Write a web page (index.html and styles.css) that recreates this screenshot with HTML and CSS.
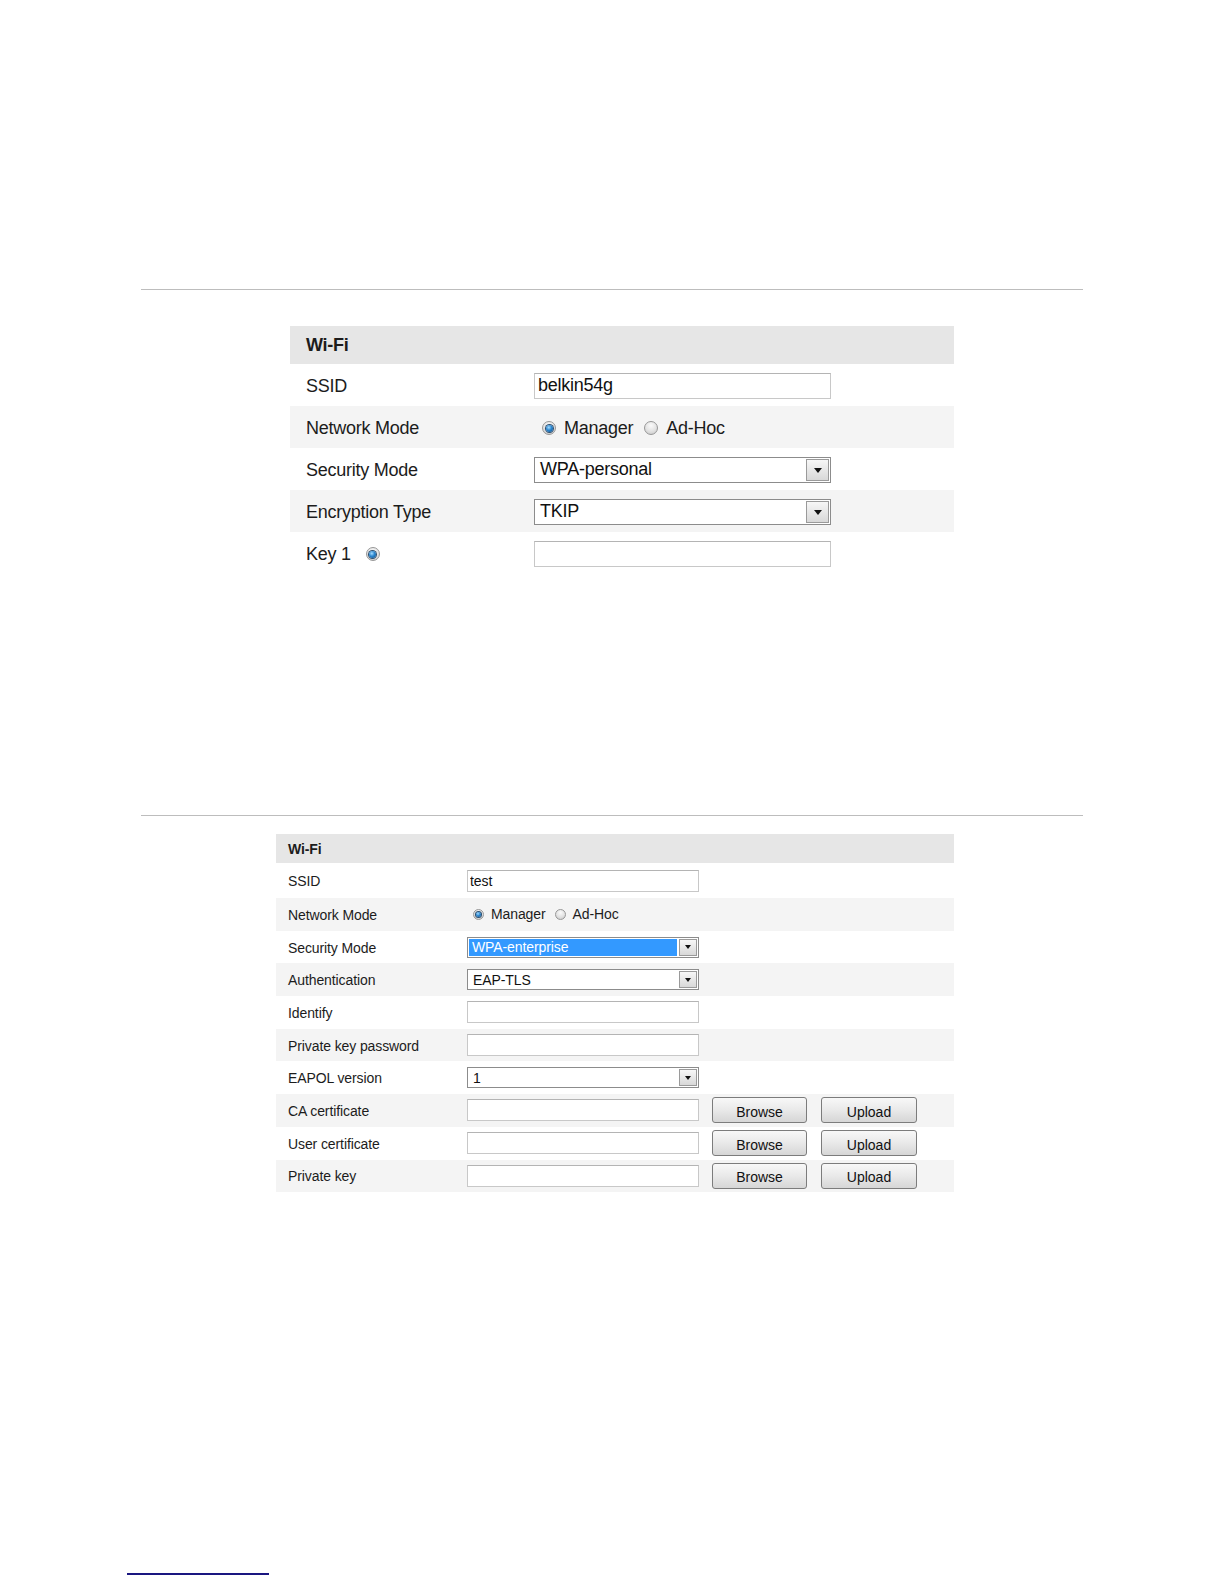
FILE: index.html
```html
<!DOCTYPE html>
<html lang="en">
<head>
    <meta charset="UTF-8">
    <title>Wi-Fi Settings</title>
    <link rel="stylesheet" href="styles.css">
</head>
<body>
    <div class="page">
        <div class="rule"></div>

        <!-- WPA-personal -->
        <div class="panel big">
            <div class="head">Wi-Fi</div>
            <div class="row">
                <div class="label">SSID</div>
                <div class="ctrl"><input class="field" type="text" value="belkin54g"></div>
            </div>
            <div class="row alt">
                <div class="label">Network Mode</div>
                <div class="ctrl radios">
                    <span class="radio on"></span><span class="opt">Manager</span>
                    <span class="radio"></span><span class="opt">Ad-Hoc</span>
                </div>
            </div>
            <div class="row">
                <div class="label">Security Mode</div>
                <div class="ctrl">
                    <div class="select"><span class="val">WPA-personal</span><span class="drop"></span></div>
                </div>
            </div>
            <div class="row alt">
                <div class="label">Encryption Type</div>
                <div class="ctrl">
                    <div class="select"><span class="val">TKIP</span><span class="drop"></span></div>
                </div>
            </div>
            <div class="row">
                <div class="label">Key 1 <span class="radio on key"></span></div>
                <div class="ctrl"><input class="field" type="text" value=""></div>
            </div>
        </div>

        <div class="rule second"></div>

        <!-- WPA-enterprise -->
        <div class="panel small">
            <div class="head">Wi-Fi</div>
            <div class="row first">
                <div class="label">SSID</div>
                <div class="ctrl"><input class="field" type="text" value="test"></div>
            </div>
            <div class="row alt">
                <div class="label">Network Mode</div>
                <div class="ctrl radios">
                    <span class="radio on"></span><span class="opt">Manager</span>
                    <span class="radio"></span><span class="opt">Ad-Hoc</span>
                </div>
            </div>
            <div class="row">
                <div class="label">Security Mode</div>
                <div class="ctrl">
                    <div class="select"><span class="val picked">WPA-enterprise</span><span class="drop"></span></div>
                </div>
            </div>
            <div class="row alt">
                <div class="label">Authentication</div>
                <div class="ctrl">
                    <div class="select"><span class="val">EAP-TLS</span><span class="drop"></span></div>
                </div>
            </div>
            <div class="row">
                <div class="label">Identify</div>
                <div class="ctrl"><input class="field" type="text" value=""></div>
            </div>
            <div class="row alt">
                <div class="label">Private key password</div>
                <div class="ctrl"><input class="field" type="text" value=""></div>
            </div>
            <div class="row">
                <div class="label">EAPOL version</div>
                <div class="ctrl">
                    <div class="select"><span class="val">1</span><span class="drop"></span></div>
                </div>
            </div>
            <div class="row alt">
                <div class="label">CA certificate</div>
                <div class="ctrl files">
                    <input class="field" type="text" value="">
                    <button class="btn">Browse</button>
                    <button class="btn">Upload</button>
                </div>
            </div>
            <div class="row">
                <div class="label">User certificate</div>
                <div class="ctrl files">
                    <input class="field" type="text" value="">
                    <button class="btn">Browse</button>
                    <button class="btn">Upload</button>
                </div>
            </div>
            <div class="row alt">
                <div class="label">Private key</div>
                <div class="ctrl files">
                    <input class="field" type="text" value="">
                    <button class="btn">Browse</button>
                    <button class="btn">Upload</button>
                </div>
            </div>
        </div>

        <div class="footnote"></div>
    </div>
</body>
</html>
```

FILE: styles.css
```css
body {
    margin: 0;
    padding: 0;
    background-color: #ffffff;
    color: #1c1c1c;
    font-family: "Liberation Sans", Arial, sans-serif;
}

.page {
    padding-top: 289px;
}

.rule {
    margin-left: 141px;
    width: 942px;
    height: 1px;
    background-color: #bdbdbd;
}

.rule.second {
    margin-top: 241px;
}

.panel {
    display: flex;
    flex-direction: column;
}

.head {
    display: flex;
    align-items: center;
    font-weight: bold;
    background-color: #e6e6e6;
}

.row {
    display: flex;
    align-items: center;
}

.row.alt {
    background-color: #f4f4f4;
}

.label {
    display: flex;
    align-items: center;
    box-sizing: border-box;
    padding-top: 2px;
}

.ctrl {
    display: flex;
    align-items: center;
}

.field {
    box-sizing: border-box;
    margin: 0;
    border: 1px solid #c8c8c8;
    border-top-color: #b4b4b4;
    background: #fff;
    font-family: inherit;
    color: #111;
    outline: none;
}

.select {
    box-sizing: border-box;
    display: flex;
    align-items: stretch;
    border: 1px solid #8c8c8c;
    background: #fff;
    color: #111;
}

.select .val {
    flex: 1;
    display: flex;
    align-items: center;
    padding-left: 5px;
}

.select .val.picked {
    margin: 1px;
    padding-left: 3px;
    background-color: #3399ff;
    color: #fff;
}

.drop {
    position: relative;
    box-sizing: border-box;
    border: 1px solid #9a9a9a;
    margin: 1px;
    background: linear-gradient(#f7f7f7, #d8d8d8);
}

.drop::after {
    content: "";
    position: absolute;
    left: 50%;
    top: 50%;
    margin-left: -4px;
    margin-top: -2px;
    border-left: 4px solid transparent;
    border-right: 4px solid transparent;
    border-top: 5px solid #111;
}

.radio {
    position: relative;
    display: inline-block;
    box-sizing: border-box;
    border-radius: 50%;
    border: 1px solid #979797;
    background: radial-gradient(circle at 50% 30%, #fafafa, #e2e2e2 55%, #c4c4c4);
    flex-shrink: 0;
}

.radio.on::after {
    content: "";
    position: absolute;
    left: 50%;
    top: 50%;
    border-radius: 50%;
    background: radial-gradient(circle at 40% 35%, #a6dcff, #2a86cf 45%, #0c4a84);
    box-shadow: 0 0 0 1px #2d4f70;
}

.btn {
    box-sizing: border-box;
    margin: 0;
    padding: 3px 0 0;
    border: 1px solid #7c7c7c;
    border-radius: 3px;
    background: linear-gradient(#f8f8f8, #e9e9e9 50%, #d6d6d6);
    font-family: inherit;
    color: #111;
}

/* first panel: bigger text */
.big {
    margin-top: 36px;
    margin-left: 290px;
    width: 664px;
    font-size: 18px;
    letter-spacing: -0.25px;
}

.big .head {
    height: 38px;
    padding-left: 16px;
}

.big .row {
    height: 42px;
}

.big .label {
    width: 244px;
    padding-left: 16px;
}

.big .field,
.big .select {
    width: 297px;
    height: 26px;
    margin-top: 1px;
    font-size: 18px;
    letter-spacing: -0.25px;
}

.big .field {
    padding: 0 3px;
}

.big .drop {
    width: 23px;
}

.big .radio {
    width: 14px;
    height: 14px;
}

.big .radio.on::after {
    width: 7px;
    height: 7px;
    margin: -3.5px 0 0 -3.5px;
}

.big .radios {
    padding-left: 8px;
    padding-top: 2px;
}

.big .opt {
    margin-left: 8px;
    margin-right: 11px;
}

.big .key {
    margin-left: 15px;
}

/* second panel: smaller text */
.small {
    margin-top: 18px;
    margin-left: 276px;
    width: 678px;
    font-size: 14px;
    letter-spacing: -0.1px;
}

.small .head {
    height: 29px;
    padding-left: 12px;
}

.small .row {
    height: 32.7px;
}

.small .row.first {
    height: 35px;
}

.small .label {
    width: 191px;
    padding-left: 12px;
    padding-top: 1px;
}

.small .field,
.small .select {
    width: 232px;
    height: 22px;
    font-size: 14px;
    letter-spacing: -0.1px;
}

.small .select {
    height: 21px;
}

.small .field {
    padding: 0 2px;
}

.small .drop {
    width: 18px;
}

.small .drop::after {
    margin-left: -3px;
    border-left-width: 3px;
    border-right-width: 3px;
    border-top-width: 4px;
}

.small .radio {
    width: 11px;
    height: 11px;
}

.small .radio.on::after {
    width: 5px;
    height: 5px;
    margin: -2.5px 0 0 -2.5px;
}

.small .radios {
    padding-left: 6px;
}

.small .opt {
    margin-left: 7px;
    margin-right: 9px;
}

.small .files .btn {
    width: 95px;
    height: 26px;
    margin-left: 13px;
    font-size: 14px;
}

.small .files .btn + .btn {
    width: 96px;
    margin-left: 14px;
}

.footnote {
    margin-top: 381px;
    margin-left: 127px;
    width: 142px;
    height: 2px;
    background-color: #1a1680;
}
```
